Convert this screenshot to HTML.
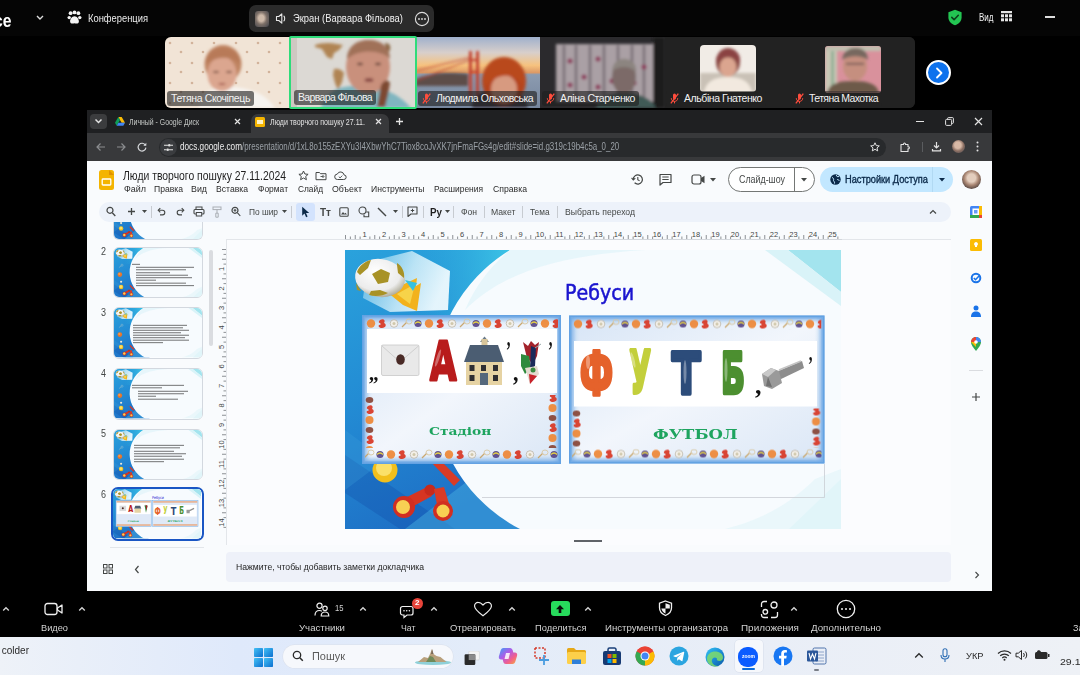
<!DOCTYPE html>
<html lang="uk">
<head>
<meta charset="utf-8">
<title>Zoom — Люди творчого пошуку</title>
<style>
*{box-sizing:border-box;margin:0;padding:0}
html,body{width:1080px;height:675px;overflow:hidden;background:#000}
body{font-family:"Liberation Sans",sans-serif;color:#fff;position:relative}
.abs{position:absolute}
.t{position:absolute;white-space:nowrap;line-height:1;transform-origin:0 50%}
/* ---------- zoom top ---------- */
#ztop{left:0;top:0;width:1080px;height:36px;background:#050505}
#gallery{left:165px;top:37px;width:750px;height:71px;background:#1c1c1c;border-radius:6px;overflow:hidden}
.tile{position:absolute;top:0;height:71px;overflow:hidden}
.nm{position:absolute;left:2px;bottom:2px;height:15px;padding:0 4px 0 4px;background:rgba(30,30,30,.62);border-radius:3px;font-size:10.5px;line-height:15px;color:#f2f2f2;white-space:nowrap;letter-spacing:.1px}
.mic{display:inline-block;width:9px;height:11px;vertical-align:-2px;margin-right:5px}
/* ---------- chrome ---------- */
#chrome{left:87px;top:110px;width:905px;height:481px;background:#f9fbfd;overflow:hidden}
#tabbar{left:0;top:0;width:905px;height:24px;background:#1f2020}
#addr{left:0;top:24px;width:905px;height:27px;background:#37383a}
/* ---------- bottom ---------- */
#zbot{left:0;top:591px;width:1080px;height:46px;background:#000}
#task{left:0;top:637px;width:1080px;height:38px;background:#e6edf7}
</style>
</head>
<body>
<svg width="0" height="0" style="position:absolute"><defs>
<linearGradient id="gbl" x1="0" y1="0" x2=".35" y2="1"><stop offset="0" stop-color="#2aa2dc"/><stop offset=".5" stop-color="#238cd4"/><stop offset="1" stop-color="#1e70c6"/></linearGradient>
<linearGradient id="gcy" x1="0" y1="0" x2="1" y2="0"><stop offset="0" stop-color="#2aa6dc" stop-opacity="0"/><stop offset="1" stop-color="#43d0ea"/></linearGradient>
<linearGradient id="gfr" x1="0" y1="0" x2="1" y2="1"><stop offset="0" stop-color="#d7e5f6"/><stop offset=".5" stop-color="#f2f6fc"/><stop offset="1" stop-color="#dbe7f6"/></linearGradient>
<linearGradient id="ghex" x1="0" y1="0" x2="1" y2=".3"><stop offset="0" stop-color="#bfeaf8" stop-opacity=".35"/><stop offset=".6" stop-color="#dff5fc" stop-opacity=".8"/><stop offset="1" stop-color="#f4fcff" stop-opacity=".92"/></linearGradient>
<filter id="sb"><feGaussianBlur stdDeviation=".6"/></filter>
<filter id="sb3" x="-10%" y="-10%" width="120%" height="120%"><feGaussianBlur stdDeviation="2.500"/></filter>
<filter id="sb2"><feGaussianBlur stdDeviation="1.200"/></filter>
<radialGradient id="gball" cx=".4" cy=".35" r=".7"><stop offset="0" stop-color="#fff"/><stop offset=".7" stop-color="#ececec"/><stop offset="1" stop-color="#a8a48f"/></radialGradient>
<symbol id="bg" viewBox="0 0 496 279" preserveAspectRatio="none">
  <rect width="496" height="279" fill="#f6fafd"/>
  <rect width="200" height="279" fill="url(#gbl)"/>
  <rect x="60" width="120" height="90" fill="url(#gcy)"/>
  <path d="M0 205L110 279H55L0 243z" fill="#0f4aa6" opacity=".3"/><path d="M60 279L150 210 178 279z" fill="#49b4e2" opacity=".45"/><path d="M0 180l40 30-40 30z" fill="#3aa0dc" opacity=".3"/><g filter="url(#sb)"><circle cx="33" cy="150" r="13" fill="#e8752a"/><circle cx="30" cy="146" r="6" fill="#f49a4a"/><circle cx="40" cy="190" r="6" fill="#f0e9d8"/><path d="M28 110l14-10" stroke="#d8d0b8" stroke-width="2"/><circle cx="45" cy="97" r="6" fill="none" stroke="#e8e0c8" stroke-width="1.500"/></g>
  <path d="M165 0A160 160 0 0 0 175 279L496 279 496 0z" fill="#f7fbfe"/>
  <path d="M165 0A160 160 0 0 0 120 60 C160 20 220 5 300 0z" fill="#e4f5fb" opacity=".9"/>
  <path d="M443 0h53v42z" fill="#a3e4ee"/><path d="M443 0l53 42v14L420 0z" fill="#d9f3f8"/>
  <path d="M496 279v-50l-52 50z" fill="#cdeff6"/><path d="M380 279c30-8 60-20 90-50l26-10v60z" fill="#e6f6fa" opacity=".8"/>
  <path d="M67 1L105 21 103 60 45 62 18 48 23 12z" fill="url(#ghex)"/>
  <g filter="url(#sb)"><path d="M42 42l30-14-1 8 5-3-4 28-14-6z" fill="#f2b21f"/><path d="M52 44l18-10-5 20z" fill="#f7d34a"/><path d="M60 30l12 3-4 8z" fill="#35c1e0"/>
  <ellipse cx="35" cy="28" rx="25" ry="19" transform="rotate(8 35 28)" fill="url(#gball)"/><path d="M27 24l9-5 9 4-2 9-10 2z" fill="#a89226"/><path d="M12 22c2-6 8-11 14-12l-3 8-8 7zM52 13c5 3 8 9 7 15l-6-5-1-8zM24 45c6 2 14 1 19-2l-8-3-9 1zM11 33l5 8-4-1z" fill="#a89226"/></g>
  <g filter="url(#sb)"><circle cx="40" cy="220" r="12.500" fill="#f2bf1f"/><circle cx="39" cy="218" r="8" fill="#fbe06a"/>
  <path d="M86 212l7-4 22 22-6 6z" fill="#d93a25"/>
  <path d="M60 248l22-11 5 9-22 12z" fill="#d63422"/><circle cx="59" cy="257" r="11" fill="#d12f20"/><circle cx="58" cy="257" r="7" fill="#f8cf52"/><circle cx="85" cy="240" r="5.500" fill="#c62a1c"/>
  <path d="M89 239l10-2 6 20-12 3z" fill="#d93a25"/><circle cx="98" cy="261" r="10" fill="#d12f20"/><circle cx="98" cy="261" r="6.500" fill="#f8cf52"/></g>
</symbol>
<pattern id="items" width="58" height="11" patternUnits="userSpaceOnUse"><circle cx="6" cy="5.500" r="4.200" fill="#ee8a3a"/><path d="M15 2c3-2 6 0 4 3 3 1 2 5-2 5-3 0-4-2-3-3 2 0 2-1 1-2-1 0-2-1 0-3z" fill="#d93a2a"/><circle cx="29" cy="5.500" r="3.800" fill="#f4f0e8" stroke="#b9b3a3" stroke-width=".8"/><circle cx="29" cy="5.500" r="1.500" fill="#cfc6a8"/><path d="M37 9l5-5" stroke="#c9a46a" stroke-width="1.300"/><ellipse cx="44" cy="3.500" rx="3" ry="2.500" fill="none" stroke="#d8c9a6" stroke-width="1"/><circle cx="53" cy="5.500" r="3.600" fill="#5a4a8a"/><path d="M50 5.500c2-2 4-2 6 0" stroke="#e8d33a" stroke-width="1.200" fill="none"/></pattern>
<pattern id="itemsv" width="11" height="30" patternUnits="userSpaceOnUse"><ellipse cx="5.500" cy="5" rx="3.800" ry="3" fill="#8a4a3a"/><path d="M4 11c3-2 6 0 4 3 3 1 2 5-2 5-3 0-4-2-3-3 2 0 2-1 1-2-1 0-2-1 0-3z" fill="#d93a2a"/><circle cx="5.500" cy="25" r="4" fill="#ee8a3a"/></pattern>
</defs></svg>
<div id="ztop" class="abs">
  <span class="t" style="left:-6px;top:11.8px;font-size:18px;color:#fff;font-weight:bold;transform:scaleX(0.874)">ce</span>
  <svg class="abs" style="left:35px;top:14px" width="10" height="8" viewBox="0 0 10 8"><path d="M2 2 L5 5 L8 2" fill="none" stroke="#ddd" stroke-width="1.4"/></svg>
  <svg class="abs" style="left:67px;top:10px" width="15" height="15" viewBox="0 0 15 15"><g fill="#f4f4f4"><circle cx="3.6" cy="3.2" r="1.9"/><circle cx="7.5" cy="2.4" r="1.9"/><circle cx="11.4" cy="3.2" r="1.9"/><circle cx="2.2" cy="7.6" r="1.7"/><circle cx="12.8" cy="7.6" r="1.7"/><path d="M7.5 6.2c2.6 0 4.4 3 4.4 5.2 0 1.6-1.3 2.2-2.4 2.2-.8 0-1.3-.4-2-.4s-1.200.4-2 .4c-1.100 0-2.400-.6-2.400-2.200 0-2.200 1.800-5.200 4.400-5.200z"/></g></svg>
  <span class="t" style="left:88px;top:12.5px;font-size:11px;color:#ececec;transform:scaleX(0.851)">Конференция</span>
  <div class="abs" style="left:249px;top:5px;width:185px;height:27px;background:#2b2b2b;border-radius:7px"></div>
  <div class="abs" style="left:255px;top:11px;width:14px;height:16px;border-radius:3px;background:radial-gradient(ellipse at 45% 45%,#cdb9a8 0 25%,#7d7068 50%,#3c4048 100%)"></div>
  <svg class="abs" style="left:275px;top:12px" width="12" height="13" viewBox="0 0 12 13"><path d="M1.500 4.500h2.300l3-2.700v9.400l-3-2.700H1.500z" fill="none" stroke="#e8e8e8" stroke-width="1.100" stroke-linejoin="round"/><path d="M9 4.200c.9.700.9 3.900 0 4.600" fill="none" stroke="#e8e8e8" stroke-width="1.100" stroke-linecap="round"/></svg>
  <span class="t" style="left:293px;top:13.05px;font-size:11.5px;color:#f0f0f0;transform:scaleX(0.815)">Экран (Варвара Фільова)</span>
  <svg class="abs" style="left:414px;top:11px" width="16" height="16" viewBox="0 0 16 16"><circle cx="8" cy="8" r="6.600" fill="none" stroke="#ddd" stroke-width="1.100"/><circle cx="5" cy="8" r=".9" fill="#ddd"/><circle cx="8" cy="8" r=".9" fill="#ddd"/><circle cx="11" cy="8" r=".9" fill="#ddd"/></svg>
  <svg class="abs" style="left:947px;top:9px" width="16" height="17" viewBox="0 0 16 17"><path d="M8 .8l6.600 2.400v5c0 3.900-2.800 6.700-6.600 8-3.800-1.300-6.600-4.100-6.600-8v-5z" fill="#23c552"/><path d="M4.800 8.400l2.300 2.300 4.200-4.400" fill="none" stroke="#0a3d19" stroke-width="1.600" stroke-linecap="round" stroke-linejoin="round"/></svg>
  <span class="t" style="left:979px;top:12.25px;font-size:10.5px;color:#f0f0f0;transform:scaleX(0.763)">Вид</span>
  <svg class="abs" style="left:1001px;top:11px" width="11" height="11" viewBox="0 0 11 11"><g fill="#e6e6e6"><rect x="0" y="0" width="11" height="2.200"/><rect x="0" y="3.300" width="3" height="3"/><rect x="4" y="3.300" width="3" height="3"/><rect x="8" y="3.300" width="3" height="3"/><rect x="0" y="7.300" width="3" height="3"/><rect x="4" y="7.300" width="3" height="3"/><rect x="8" y="7.300" width="3" height="3"/></g></svg>
  <div class="abs" style="left:1045px;top:16px;width:10px;height:1.500px;background:#ddd"></div>
</div>
<div id="gallery" class="abs">
  <!-- tile 1 -->
  <div class="tile" style="left:0;width:124px">
    <svg width="124" height="71" viewBox="0 0 124 71"><defs><filter id="b1"><feGaussianBlur stdDeviation="1.600"/></filter><filter id="b2"><feGaussianBlur stdDeviation="3"/></filter><pattern id="dots" width="22" height="20" patternUnits="userSpaceOnUse"><circle cx="5" cy="6" r="1.300" fill="#b98a6a"/><circle cx="16" cy="15" r="1.300" fill="#b98a6a"/></pattern></defs>
      <rect width="124" height="71" fill="#f1e4d6"/><rect width="124" height="71" fill="url(#dots)" opacity=".55"/>
      <g filter="url(#b1)"><path d="M34 71c1-13 8-19 26-21 22-1 40 6 50 21z" fill="#f6f3ef"/><ellipse cx="58" cy="27" rx="18.500" ry="19" fill="#c08462"/><ellipse cx="57" cy="37" rx="14.500" ry="17.500" fill="#dba68f"/><path d="M40 27c2-12 10-17 20-16 9 1 16 7 16 17-7-8-20-11-36-1z" fill="#b87a58"/><ellipse cx="51" cy="35" rx="3" ry="1.100" fill="#6d4536"/><ellipse cx="64" cy="35" rx="3" ry="1.100" fill="#6d4536"/><ellipse cx="57" cy="47" rx="3.500" ry="1.100" fill="#a4574d"/></g>
    </svg>
    <div class="nm" style="letter-spacing:-.38px">Тетяна Скочіпець</div>
  </div>
  <!-- tile 2 (active speaker) -->
  <div class="tile" style="left:124px;width:127px">
    <svg width="127" height="71" viewBox="0 0 127 71">
      <rect width="127" height="71" fill="#dcd9d4"/><rect x="0" width="8" height="71" fill="#cfc8c2"/>
      <g filter="url(#b1)"><path d="M26 8c5-2 14-3 22-1l6 1-4 5-5 3-2 6-5-2-5-8-7-2zM45 32c4-1 8 1 10 4l-2 9-4 8-3-7-2-8z" fill="#b08452"/><path d="M96 6c4 0 6 2 5 7l-3 4z" fill="#8a6642"/>
      <path d="M32 71c3-13 14-22 34-22 22 0 42 5 56 22z" fill="#7fb6c0"/><ellipse cx="79" cy="30" rx="22" ry="27" fill="#c9907c"/><path d="M58 22c0-14 12-20 24-19 11 1 19 7 19 19-8-9-30-11-43 0z" fill="#a07158"/><ellipse cx="71" cy="27" rx="3" ry="1.200" fill="#5f3f34"/><ellipse cx="89" cy="27" rx="3" ry="1.200" fill="#5f3f34"/><ellipse cx="80" cy="43" rx="4.500" ry="2" fill="#8a4a45"/><path d="M92 48c3-5 7-6 9-2l-2 12-3 12h-8z" fill="#7d4a30"/></g>
    </svg>
    
    <div class="nm" style="left:5px;bottom:3px;letter-spacing:-.65px">Варвара Фільова</div>
  </div>
  <!-- tile 3 -->
  <div class="tile" style="left:251px;width:124px">
    <svg width="124" height="71" viewBox="0 0 124 71"><defs><linearGradient id="sky" x1="0" y1="0" x2="0" y2="1"><stop offset="0" stop-color="#9fb0cc"/><stop offset=".22" stop-color="#d8cfcb"/><stop offset=".4" stop-color="#f6c27e"/><stop offset=".5" stop-color="#dd9a66"/><stop offset=".53" stop-color="#8c9bb0"/><stop offset="1" stop-color="#76869e"/></linearGradient></defs>
      <rect width="124" height="71" fill="url(#sky)"/>
      <g filter="url(#b1)"><path d="M0 42c14-6 30-7 52-5v12H0z" fill="#5d4d4a"/><path d="M0 44l56-22M0 34l56-14" stroke="#b8402e" stroke-width="1"/><rect x="53" y="14" width="3" height="46" fill="#c2412d"/><rect x="60" y="14" width="3" height="46" fill="#c2412d"/><rect x="53" y="22" width="10" height="2" fill="#c2412d"/><rect x="53" y="34" width="10" height="2" fill="#c2412d"/>
      <path d="M56 71c0-10 8-16 16-17h22c10 1 16 7 18 17z" fill="#3c3a44"/><ellipse cx="88" cy="44" rx="22" ry="24" fill="#b5451f"/><ellipse cx="88" cy="52" rx="13" ry="14" fill="#d79a80"/><path d="M68 50c-2-22 10-30 22-29 12 1 20 10 18 28-6-12-24-16-40 1z" fill="#b9481f"/></g>
    </svg>
    <div class="nm" style="letter-spacing:-.5px"><svg class="mic" viewBox="0 0 9 11"><rect x="3" y=".5" width="3" height="6" rx="1.500" fill="#ff4d3d"/><path d="M1.300 5.200c0 2 1.400 3.200 3.200 3.200s3.200-1.200 3.200-3.200M4.500 8.400v2" fill="none" stroke="#ff4d3d" stroke-width="1"/><path d="M8.300.6L.8 10.300" stroke="#ff4d3d" stroke-width="1.300"/></svg>Людмила Ольховська</div>
  </div>
  <!-- tile 4 -->
  <div class="tile" style="left:375px;width:125px">
    <svg width="125" height="71" viewBox="0 0 125 71">
      <rect width="125" height="71" fill="#2b2a2d"/>
      <g filter="url(#b1)"><rect x="16" y="7" width="98" height="58" fill="#aaa0a5"/><path d="M24 8v56M36 8v56M50 8v56M64 8v56M78 8v56M92 8v56M104 8v56" stroke="#776d73" stroke-width="2.500"/><g fill="#8a2f55"><circle cx="30" cy="24" r="2.500"/><circle cx="44" cy="40" r="2.500"/><circle cx="58" cy="22" r="2.500"/><circle cx="72" cy="44" r="2.500"/><circle cx="86" cy="28" r="2.500"/><circle cx="30" cy="48" r="2.500"/><circle cx="58" cy="50" r="2.500"/><circle cx="94" cy="46" r="2.500"/></g>
      <rect x="113" y="0" width="12" height="71" fill="#1d1c1f"/><circle cx="104" cy="30" r="2.500" fill="#8a2f55"/><path d="M56 71c2-10 12-15 28-15s28 6 32 15z" fill="#3f5a56"/><ellipse cx="84" cy="40" rx="12" ry="17" fill="#7c6a68"/><path d="M72 34c1-10 8-13 14-12 7 1 11 6 10 13-6-6-16-7-24-1z" fill="#8c8580"/></g>
    </svg>
    <div class="nm" style="letter-spacing:-.43px"><svg class="mic" viewBox="0 0 9 11"><rect x="3" y=".5" width="3" height="6" rx="1.500" fill="#ff4d3d"/><path d="M1.300 5.200c0 2 1.400 3.200 3.200 3.200s3.200-1.200 3.200-3.200M4.500 8.400v2" fill="none" stroke="#ff4d3d" stroke-width="1"/><path d="M8.300.6L.8 10.300" stroke="#ff4d3d" stroke-width="1.300"/></svg>Аліна Старченко</div>
  </div>
  <!-- tile 5 -->
  <div class="tile" style="left:500px;width:125px;background:#222">
    <svg class="abs" style="left:35px;top:8px" width="56" height="47" viewBox="0 0 56 47"><defs><clipPath id="c5"><rect width="56" height="47" rx="4"/></clipPath></defs><g clip-path="url(#c5)"><rect width="56" height="47" fill="#f1ece6"/><g filter="url(#b1)"><rect x="0" y="28" width="56" height="19" fill="#c9c1b6"/><path d="M4 47c2-10 10-15 24-15s22 5 24 15z" fill="#f2e9df"/><ellipse cx="28" cy="17" rx="12" ry="14" fill="#8a4a44"/><ellipse cx="28" cy="22" rx="8.500" ry="10" fill="#dba58f"/><path d="M16 18c0-10 6-14 13-14s12 5 11 14c-6-7-16-8-24 0z" fill="#8b4343"/></g></g></svg>
    <div class="nm" style="left:1px;letter-spacing:-.43px;background:rgba(34,34,34,.55)"><svg class="mic" viewBox="0 0 9 11"><rect x="3" y=".5" width="3" height="6" rx="1.500" fill="#ff4d3d"/><path d="M1.300 5.200c0 2 1.400 3.200 3.200 3.200s3.200-1.200 3.200-3.200M4.500 8.400v2" fill="none" stroke="#ff4d3d" stroke-width="1"/><path d="M8.300.6L.8 10.300" stroke="#ff4d3d" stroke-width="1.300"/></svg>Альбіна Гнатенко</div>
  </div>
  <!-- tile 6 -->
  <div class="tile" style="left:625px;width:125px;background:#222">
    <svg class="abs" style="left:35px;top:9px" width="56" height="47" viewBox="0 0 56 47"><defs><clipPath id="c6"><rect width="56" height="47" rx="3"/></clipPath></defs><g clip-path="url(#c6)"><rect width="56" height="47" fill="#d9919c"/><g filter="url(#b1)"><rect x="0" y="0" width="12" height="47" fill="#c9c7b6"/><rect x="6" y="0" width="3" height="47" fill="#8fae95"/><rect x="0" y="0" width="56" height="5" fill="#bfc1b0"/><path d="M2 47c2-9 10-12 26-12s24 3 26 12z" fill="#6d5a49"/><ellipse cx="30" cy="20" rx="12" ry="15" fill="#c58f7f"/><path d="M17 14c1-9 7-12 14-12 7 0 12 4 12 12-7-5-18-5-26 0z" fill="#77675f"/><rect x="21" y="17" width="18" height="1.500" fill="#5a4a48"/></g></g></svg>
    <div class="nm" style="left:1px;letter-spacing:-.59px;background:rgba(34,34,34,.55)"><svg class="mic" viewBox="0 0 9 11"><rect x="3" y=".5" width="3" height="6" rx="1.500" fill="#ff4d3d"/><path d="M1.300 5.200c0 2 1.400 3.200 3.200 3.200s3.200-1.200 3.200-3.200M4.500 8.400v2" fill="none" stroke="#ff4d3d" stroke-width="1"/><path d="M8.300.6L.8 10.300" stroke="#ff4d3d" stroke-width="1.300"/></svg>Тетяна Махотка</div>
  </div>
</div>
<div class="abs" style="left:288.500px;top:36px;width:128px;height:73px;border:2.500px solid #2fdc7a;border-radius:2px"></div>
<div class="abs" style="left:926px;top:60px;width:25px;height:25px;border-radius:50%;background:#0e72ed;border:2px solid #fff"></div>
<svg class="abs" style="left:934px;top:67px" width="10" height="12" viewBox="0 0 10 12"><path d="M3 1.500L7.500 6 3 10.500" fill="none" stroke="#fff" stroke-width="1.800" stroke-linecap="round" stroke-linejoin="round"/></svg>
<div id="chrome" class="abs"><div class="abs" id="cw" style="left:-87px;top:-110px;width:1080px;height:675px">
  <div class="abs" style="left:87px;top:110px;width:905px;height:24px;background:#1f2022"></div>
  <div class="abs" style="left:87px;top:133px;width:905px;height:28px;background:#38393b"></div>
  <!-- tab strip -->
  <div class="abs" style="left:90px;top:114px;width:17px;height:15px;border-radius:4px;background:#3b3c3e"></div>
  <svg class="abs" style="left:94px;top:118px" width="9" height="7" viewBox="0 0 9 7"><path d="M1.500 1.500L4.500 4.500 7.500 1.500" fill="none" stroke="#e3e3e3" stroke-width="1.500"/></svg>
  <svg class="abs" style="left:115px;top:117px" width="10" height="9" viewBox="0 0 10 9"><path d="M3.300 0h3.400L10 5.800H6.600z" fill="#fbbc04"/><path d="M3.300 0L0 5.800l1.700 3L5 3z" fill="#0f9d58"/><path d="M1.700 8.800h6.600L10 5.800H3.400z" fill="#4285f4"/></svg>
  <span class="t" style="left:129px;top:117.5px;font-size:9px;color:#c4c7c5;transform:scaleX(0.768)">Личный - Google Диск</span>
  <svg class="abs" style="left:234px;top:118px" width="7" height="7" viewBox="0 0 7 7"><path d="M1 1l5 5M6 1L1 6" stroke="#e3e3e3" stroke-width="1.200"/></svg>
  <div class="abs" style="left:251px;top:114px;width:138px;height:20px;background:#38393b;border-radius:7px 7px 0 0"></div>
  <div class="abs" style="left:255px;top:117px;width:10px;height:10px;border-radius:1.500px;background:#f4b400"></div>
  <div class="abs" style="left:257px;top:120px;width:6px;height:4px;background:#fff3c4"></div>
  <span class="t" style="left:270px;top:117.5px;font-size:9px;color:#e3e3e3;transform:scaleX(0.784)">Люди творчого пошуку 27.11.</span>
  <svg class="abs" style="left:375px;top:118px" width="7" height="7" viewBox="0 0 7 7"><path d="M1 1l5 5M6 1L1 6" stroke="#e3e3e3" stroke-width="1.200"/></svg>
  <svg class="abs" style="left:395px;top:117px" width="9" height="9" viewBox="0 0 9 9"><path d="M4.500 1v7M1 4.500h7" stroke="#e3e3e3" stroke-width="1.300"/></svg>
  <div class="abs" style="left:916px;top:121px;width:8px;height:1.200px;background:#e3e3e3"></div>
  <svg class="abs" style="left:945px;top:117px" width="9" height="9" viewBox="0 0 9 9"><rect x=".6" y="2.400" width="6" height="6" rx="1" fill="none" stroke="#e3e3e3" stroke-width="1"/><path d="M2.600 2.400V1.400c0-.4.300-.8.800-.8h4.200c.4 0 .8.300.8.800v4.200c0 .4-.3.800-.8.800H6.600" fill="none" stroke="#e3e3e3" stroke-width="1"/></svg>
  <svg class="abs" style="left:974px;top:117px" width="9" height="9" viewBox="0 0 9 9"><path d="M1 1l7 7M8 1L1 8" stroke="#e3e3e3" stroke-width="1.200"/></svg>
  <!-- address bar -->
  <svg class="abs" style="left:96px;top:142px" width="10" height="10" viewBox="0 0 10 10"><path d="M9 5H1.500M4.500 1.500L1 5l3.500 3.500" fill="none" stroke="#8b8d90" stroke-width="1.200"/></svg>
  <svg class="abs" style="left:116px;top:142px" width="10" height="10" viewBox="0 0 10 10"><path d="M1 5h7.500M5.500 1.500L9 5 5.500 8.500" fill="none" stroke="#8b8d90" stroke-width="1.200"/></svg>
  <svg class="abs" style="left:137px;top:142px" width="10" height="10" viewBox="0 0 10 10"><path d="M8.400 3.200A3.900 3.900 0 1 0 8.900 5.600" fill="none" stroke="#d7d9dc" stroke-width="1.200"/><path d="M9.300.8v3h-3z" fill="#d7d9dc"/></svg>
  <div class="abs" style="left:159px;top:138px;width:727px;height:19px;border-radius:10px;background:#282a2c"></div>
  <div class="abs" style="left:160px;top:139px;width:17px;height:17px;border-radius:50%;background:#3a3c3f"></div>
  <svg class="abs" style="left:164px;top:143px" width="9" height="9" viewBox="0 0 9 9"><path d="M0 2.200h4M6.500 2.200H9M0 6.800h2.500M5 6.800h4" stroke="#e3e3e3" stroke-width="1.100"/><circle cx="5.300" cy="2.200" r="1.300" fill="#e3e3e3"/><circle cx="3.700" cy="6.800" r="1.300" fill="#e3e3e3"/></svg>
  <span class="t" style="left:180px;top:142px;font-size:10px;color:#ececec;transform:scaleX(0.820)">docs.google.com</span>
  <span class="t" style="left:242px;top:142px;font-size:10px;color:#9aa0a6;transform:scaleX(0.790)">/presentation/d/1xL8o155zEXYu3I4XbwYhC7Tiox8coJvXK7jnFmaFGs4g/edit#slide=id.g319c19b4c5a_0_20</span>
  <svg class="abs" style="left:870px;top:142px" width="10" height="10" viewBox="0 0 10 10"><path d="M5 .8l1.300 2.800 3 .3-2.300 2 .7 3L5 7.300 2.300 8.900l.7-3-2.300-2 3-.3z" fill="none" stroke="#e3e3e3" stroke-width="1"/></svg>
  <svg class="abs" style="left:899px;top:141px" width="12" height="12" viewBox="0 0 12 12"><path d="M2 3.500h2.500c-.3-1.800 2.300-1.800 2 0H9v2.300c1.800-.3 1.800 2.300 0 2V10.500H2z" fill="none" stroke="#e3e3e3" stroke-width="1.100" stroke-linejoin="round"/></svg>
  <div class="abs" style="left:922px;top:142px;width:1px;height:10px;background:#5a5c5f"></div>
  <svg class="abs" style="left:931px;top:141px" width="11" height="11" viewBox="0 0 11 11"><path d="M5.500 1v5.500M3 4.500L5.500 7 8 4.500M1.500 8v1.800h8V8" fill="none" stroke="#e3e3e3" stroke-width="1.200"/></svg>
  <div class="abs" style="left:952px;top:140px;width:13px;height:13px;border-radius:50%;background:radial-gradient(circle at 45% 40%,#d8b9a6 0 30%,#8b6f63 55%,#4a4a52 100%)"></div>
  <svg class="abs" style="left:976px;top:141px" width="3" height="11" viewBox="0 0 3 11"><circle cx="1.500" cy="1.500" r="1" fill="#e3e3e3"/><circle cx="1.500" cy="5.500" r="1" fill="#e3e3e3"/><circle cx="1.500" cy="9.500" r="1" fill="#e3e3e3"/></svg>
  <!-- docs header -->
  <div class="abs" style="left:99px;top:170px;width:15px;height:20px;border-radius:2.500px;background:#f4b400"></div>
  <svg class="abs" style="left:99px;top:170px" width="15" height="20" viewBox="0 0 15 20"><path d="M10 0l5 5h-5z" fill="#e09200"/><rect x="3.200" y="9" width="8.600" height="6" rx=".8" fill="none" stroke="#fff" stroke-width="1.300"/></svg>
  <span class="t" style="left:123px;top:168.75px;font-size:13.5px;color:#1f1f1f;transform:scaleX(0.770)">Люди творчого пошуку 27.11.2024</span>
  <svg class="abs" style="left:298px;top:170px" width="11" height="11" viewBox="0 0 11 11"><path d="M5.500 1l1.400 3 3.200.3-2.400 2.200.7 3.200-2.900-1.700-2.900 1.700.7-3.200L.9 4.300l3.200-.3z" fill="none" stroke="#444746" stroke-width="1"/></svg>
  <svg class="abs" style="left:315px;top:170px" width="12" height="11" viewBox="0 0 12 11"><path d="M1 2.500h3.500l1 1.200H11v6H1z" fill="none" stroke="#444746" stroke-width="1"/><path d="M5.500 6.500h3M7.500 5l1.500 1.500L7.500 8" fill="none" stroke="#444746" stroke-width=".9"/></svg>
  <svg class="abs" style="left:334px;top:170px" width="13" height="11" viewBox="0 0 13 11"><path d="M3.500 9.500a2.700 2.700 0 0 1-.2-5.400 3.500 3.500 0 0 1 6.700.8 2.300 2.300 0 0 1-.3 4.600z" fill="none" stroke="#444746" stroke-width="1"/><path d="M4.800 6.700l1.300 1.200 2.200-2.300" fill="none" stroke="#444746" stroke-width=".9"/></svg>
  <span class="t" style="left:124px;top:183.75px;font-size:9.5px;color:#2b2b2b;transform:scaleX(0.942)">Файл</span>
  <span class="t" style="left:154px;top:183.75px;font-size:9.5px;color:#2b2b2b;transform:scaleX(0.904)">Правка</span>
  <span class="t" style="left:191px;top:183.75px;font-size:9.5px;color:#2b2b2b;transform:scaleX(0.931)">Вид</span>
  <span class="t" style="left:216px;top:183.75px;font-size:9.5px;color:#2b2b2b;transform:scaleX(0.906)">Вставка</span>
  <span class="t" style="left:258px;top:183.75px;font-size:9.5px;color:#2b2b2b;transform:scaleX(0.889)">Формат</span>
  <span class="t" style="left:298px;top:183.75px;font-size:9.5px;color:#2b2b2b;transform:scaleX(0.876)">Слайд</span>
  <span class="t" style="left:332px;top:183.75px;font-size:9.5px;color:#2b2b2b;transform:scaleX(0.927)">Объект</span>
  <span class="t" style="left:371px;top:183.75px;font-size:9.5px;color:#2b2b2b;transform:scaleX(0.903)">Инструменты</span>
  <span class="t" style="left:434px;top:183.75px;font-size:9.5px;color:#2b2b2b;transform:scaleX(0.887)">Расширения</span>
  <span class="t" style="left:492.5px;top:183.75px;font-size:9.5px;color:#2b2b2b;transform:scaleX(0.912)">Справка</span>
  <!-- right header -->
  <svg class="abs" style="left:631px;top:173px" width="13" height="13" viewBox="0 0 13 13"><path d="M2.200 6.500a4.600 4.600 0 1 1 1.400 3.300" fill="none" stroke="#444746" stroke-width="1.200"/><path d="M.6 4.800l1.700 2.200 2-1.800" fill="none" stroke="#444746" stroke-width="1.100"/><path d="M6.800 4v2.800l1.800 1.100" fill="none" stroke="#444746" stroke-width="1.100"/></svg>
  <svg class="abs" style="left:659px;top:173px" width="13" height="13" viewBox="0 0 13 13"><path d="M1 1.500h11v8H4L1 12z" fill="none" stroke="#444746" stroke-width="1.200" stroke-linejoin="round"/><path d="M3.300 4h6.400M3.300 6.500h6.400" stroke="#444746" stroke-width="1"/></svg>
  <svg class="abs" style="left:691px;top:174px" width="15" height="11" viewBox="0 0 15 11"><rect x="1" y="1" width="9" height="9" rx="2" fill="none" stroke="#444746" stroke-width="1.200"/><path d="M10 4l3.500-2.200v7.400L10 7z" fill="#444746"/></svg>
  <svg class="abs" style="left:710px;top:178px" width="6" height="4" viewBox="0 0 6 4"><path d="M0 0h6L3 3.500z" fill="#444746"/></svg>
  <div class="abs" style="left:728px;top:167px;width:87px;height:25px;border:1px solid #747775;border-radius:13px;background:#fff"></div>
  <div class="abs" style="left:794px;top:168px;width:1px;height:23px;background:#747775"></div>
  <span class="t" style="left:738.5px;top:174.5px;font-size:10px;color:#444746;transform:scaleX(0.887)">Слайд-шоу</span>
  <svg class="abs" style="left:801px;top:178px" width="6" height="4" viewBox="0 0 6 4"><path d="M0 0h6L3 3.500z" fill="#444746"/></svg>
  <div class="abs" style="left:820px;top:167px;width:133px;height:25px;border-radius:13px;background:#c2e7ff"></div>
  <div class="abs" style="left:932px;top:167px;width:1px;height:25px;background:#b1d9f3"></div>
  <svg class="abs" style="left:830px;top:174px" width="11" height="11" viewBox="0 0 11 11"><circle cx="5.500" cy="5.500" r="5.200" fill="#0b2a4a"/><path d="M2 3.500c1.500.5 2 1.500 1.500 2.500S5 7.500 4.500 9.500M6.500 1c-.5 1.500 1 2 2.500 1.500M7 5.500c1 0 2 .5 2.500 1.500" fill="none" stroke="#c2e7ff" stroke-width="1"/></svg>
  <span style="-webkit-text-stroke:.35px #0b2a4a"><span class="t" style="left:845px;top:174.5px;font-size:10px;color:#0b2a4a;transform:scaleX(0.923)">Настройки Доступа</span></span>
  <svg class="abs" style="left:939px;top:178px" width="6" height="4" viewBox="0 0 6 4"><path d="M0 0h6L3 3.500z" fill="#0b2a4a"/></svg>
  <div class="abs" style="left:962px;top:170px;width:19px;height:19px;border-radius:50%;background:radial-gradient(circle at 50% 42%,#e3cdbd 0 28%,#a88572 50%,#5c4b45 75%,#3a3a44 100%)"></div>
  <!-- toolbar -->
  <div class="abs" style="left:99px;top:202px;width:852px;height:20px;border-radius:10px;background:#edf2fa"></div>
  <div class="abs" style="left:296px;top:203px;width:19px;height:18px;border-radius:3px;background:#d3e3fd"></div>
  <svg class="abs" style="left:106px;top:206px" width="10" height="11" viewBox="0 0 10 11"><circle cx="4" cy="4.300" r="3" fill="none" stroke="#444746" stroke-width="1.200"/><path d="M6.300 6.700L9.300 10" stroke="#444746" stroke-width="1.300"/></svg>
  <svg class="abs" style="left:127px;top:207px" width="9" height="9" viewBox="0 0 9 9"><path d="M4.500 1v7M1 4.500h7" stroke="#444746" stroke-width="1.300"/></svg>
  <svg class="abs" style="left:142px;top:210px" width="5" height="4" viewBox="0 0 5 4"><path d="M0 0h5L2.500 3z" fill="#444746"/></svg>
  <div class="abs" style="left:151px;top:206px;width:1px;height:12px;background:#c7cbd1"></div>
  <svg class="abs" style="left:157px;top:207px" width="9" height="9" viewBox="0 0 9 9"><path d="M1.500 3.300h4a2.300 2.300 0 0 1 0 4.600H3" fill="none" stroke="#444746" stroke-width="1.100"/><path d="M3.300 1.200L1.200 3.300l2.100 2.100" fill="none" stroke="#444746" stroke-width="1.100"/></svg>
  <svg class="abs" style="left:176px;top:207px" width="9" height="9" viewBox="0 0 9 9"><path d="M7.500 3.300h-4a2.300 2.300 0 0 0 0 4.600H6" fill="none" stroke="#444746" stroke-width="1.100"/><path d="M5.700 1.200l2.100 2.100-2.100 2.100" fill="none" stroke="#444746" stroke-width="1.100"/></svg>
  <svg class="abs" style="left:193px;top:206px" width="12" height="11" viewBox="0 0 12 11"><rect x="3" y="1" width="6" height="2.500" fill="none" stroke="#444746" stroke-width="1"/><rect x="1" y="3.500" width="10" height="4.500" rx="1" fill="none" stroke="#444746" stroke-width="1.100"/><rect x="3.300" y="6.500" width="5.400" height="3.500" fill="#edf2fa" stroke="#444746" stroke-width="1"/></svg>
  <svg class="abs" style="left:212px;top:206px" width="10" height="12" viewBox="0 0 10 12"><rect x="1" y="1" width="8" height="2.600" fill="none" stroke="#a9adb3" stroke-width="1"/><path d="M5 3.600v3.500M3.800 7.200h2.400v4H3.800z" fill="none" stroke="#a9adb3" stroke-width="1"/></svg>
  <svg class="abs" style="left:231px;top:206px" width="10" height="11" viewBox="0 0 10 11"><circle cx="4" cy="4.300" r="3" fill="none" stroke="#444746" stroke-width="1.200"/><path d="M6.300 6.700L9.300 10M2.600 4.300h2.800M4 2.900v2.800" stroke="#444746" stroke-width="1.100"/></svg>
  <span class="t" style="left:249px;top:207.25px;font-size:9.5px;color:#444746;transform:scaleX(0.880)">По шир</span>
  <svg class="abs" style="left:282px;top:210px" width="5" height="4" viewBox="0 0 5 4"><path d="M0 0h5L2.500 3z" fill="#444746"/></svg>
  <div class="abs" style="left:291px;top:206px;width:1px;height:12px;background:#c7cbd1"></div>
  <svg class="abs" style="left:301px;top:206px" width="9" height="12" viewBox="0 0 9 12"><path d="M1.200.8v9l2.300-2.200 1.600 3.600 1.500-.7L5 7h3.200z" fill="#0b2a4a"/></svg>
  <span class="t" style="left:319.5px;top:206.75px;font-size:10.5px;color:#444746;font-weight:bold;transform:scaleX(0.951)">Тт</span>
  <svg class="abs" style="left:339px;top:207px" width="10" height="10" viewBox="0 0 10 10"><rect x=".8" y=".8" width="8.400" height="8.400" rx="1" fill="none" stroke="#444746" stroke-width="1.100"/><path d="M2 7.500l2-2.500 1.500 1.700 1-1L8 7.500z" fill="#444746"/></svg>
  <svg class="abs" style="left:358px;top:206px" width="12" height="12" viewBox="0 0 12 12"><circle cx="4.500" cy="4.500" r="3.500" fill="none" stroke="#444746" stroke-width="1.100"/><path d="M8.200 6h2.500v4.800H6V8.400" fill="none" stroke="#444746" stroke-width="1.100"/></svg>
  <svg class="abs" style="left:377px;top:207px" width="10" height="10" viewBox="0 0 10 10"><path d="M1 1l8 8" stroke="#444746" stroke-width="1.500"/></svg>
  <svg class="abs" style="left:392.500px;top:210px" width="5" height="4" viewBox="0 0 5 4"><path d="M0 0h5L2.500 3z" fill="#444746"/></svg>
  <div class="abs" style="left:401.500px;top:206px;width:1px;height:12px;background:#c7cbd1"></div>
  <svg class="abs" style="left:407px;top:206px" width="11" height="11" viewBox="0 0 11 11"><path d="M1 1h9v7H4l-3 2.500z" fill="none" stroke="#444746" stroke-width="1.100" stroke-linejoin="round"/><path d="M5.500 2.800v3.400M3.800 4.500h3.400" stroke="#444746" stroke-width="1"/></svg>
  <div class="abs" style="left:423px;top:206px;width:1px;height:12px;background:#c7cbd1"></div>
  <span class="t" style="left:429.5px;top:206.5px;font-size:11px;color:#1f1f1f;font-weight:bold;transform:scaleX(0.891)">Pу</span>
  <svg class="abs" style="left:445px;top:210px" width="5" height="4" viewBox="0 0 5 4"><path d="M0 0h5L2.500 3z" fill="#444746"/></svg>
  <div class="abs" style="left:453px;top:206px;width:1px;height:12px;background:#c7cbd1"></div>
  <span class="t" style="left:461px;top:207.25px;font-size:9.5px;color:#444746;transform:scaleX(0.901)">Фон</span>
  <div class="abs" style="left:484px;top:206px;width:1px;height:12px;background:#c7cbd1"></div>
  <span class="t" style="left:491px;top:207.25px;font-size:9.5px;color:#444746;transform:scaleX(0.911)">Макет</span>
  <div class="abs" style="left:522px;top:206px;width:1px;height:12px;background:#c7cbd1"></div>
  <span class="t" style="left:529.5px;top:207.25px;font-size:9.5px;color:#444746;transform:scaleX(0.872)">Тема</span>
  <div class="abs" style="left:557px;top:206px;width:1px;height:12px;background:#c7cbd1"></div>
  <span class="t" style="left:564.5px;top:207.25px;font-size:9.5px;color:#444746;transform:scaleX(0.910)">Выбрать переход</span>
  <svg class="abs" style="left:929px;top:209px" width="8" height="6" viewBox="0 0 8 6"><path d="M1 4.500l3-3 3 3" fill="none" stroke="#444746" stroke-width="1.200"/></svg>
  <!-- filmstrip -->
  <div class="abs" style="left:87px;top:222px;width:905px;height:18px;background:#f9fbfd"></div>
  <div class="abs" style="left:225.500px;top:239px;width:725px;height:306px;background:#fbfcfe;border-left:1px solid #e3e6ea;border-top:1px solid #e3e6ea"></div>
  <div class="abs" style="left:112.500px;top:222px;width:90px;height:17.500px;border:1px solid #d3d8df;border-top:0;border-radius:0 0 6px 6px;overflow:hidden;background:#fff"><svg class="abs" style="left:0;top:-33px" width="88" height="50"><use href="#bg" width="88" height="50"/></svg></div>
  <div class="abs" style="border:1px solid #d3d8df;border-radius:6px;left:112.500px;top:246.6px;width:90px;height:51.500px;background:#fff;overflow:hidden"><svg class="abs" style="left:0;top:0" width="88" height="49.500" viewBox="0 0 88 50" preserveAspectRatio="none"><use href="#bg" width="88" height="50"/><rect x="18" y="16" width="8" height="1" fill="#444" opacity=".75"/><rect x="22" y="19" width="58" height="1" fill="#444" opacity=".75"/><rect x="22" y="21.5" width="50" height="1" fill="#444" opacity=".75"/><rect x="22" y="24.5" width="34" height="1" fill="#444" opacity=".75"/><rect x="22" y="27" width="52" height="1" fill="#444" opacity=".75"/><rect x="22" y="29.5" width="56" height="1" fill="#444" opacity=".75"/><rect x="22" y="32" width="20" height="1" fill="#444" opacity=".75"/><rect x="22" y="35" width="50" height="1" fill="#444" opacity=".75"/><rect x="22" y="37.5" width="58" height="1" fill="#444" opacity=".75"/></svg></div><span class="t" style="left:100.5px;top:247.3px;font-size:10px;color:#444746;transform:scaleX(0.899)">2</span><div class="abs" style="border:1px solid #d3d8df;border-radius:6px;left:112.500px;top:307.3px;width:90px;height:51.500px;background:#fff;overflow:hidden"><svg class="abs" style="left:0;top:0" width="88" height="49.500" viewBox="0 0 88 50" preserveAspectRatio="none"><use href="#bg" width="88" height="50"/><rect x="19" y="17" width="54" height="1" fill="#444" opacity=".75"/><rect x="19" y="19.5" width="50" height="1" fill="#444" opacity=".75"/><rect x="19" y="22" width="56" height="1" fill="#444" opacity=".75"/><rect x="19" y="24.5" width="48" height="1" fill="#444" opacity=".75"/><rect x="19" y="27" width="56" height="1" fill="#444" opacity=".75"/><rect x="19" y="29.5" width="52" height="1" fill="#444" opacity=".75"/><rect x="19" y="32" width="56" height="1" fill="#444" opacity=".75"/><rect x="19" y="34.5" width="30" height="1" fill="#444" opacity=".75"/></svg></div><span class="t" style="left:100.5px;top:308px;font-size:10px;color:#444746;transform:scaleX(0.899)">3</span><div class="abs" style="border:1px solid #d3d8df;border-radius:6px;left:112.500px;top:368px;width:90px;height:51.500px;background:#fff;overflow:hidden"><svg class="abs" style="left:0;top:0" width="88" height="49.500" viewBox="0 0 88 50" preserveAspectRatio="none"><use href="#bg" width="88" height="50"/><rect x="18" y="16" width="52" height="1" fill="#444" opacity=".75"/><rect x="18" y="18.5" width="30" height="1" fill="#444" opacity=".75"/><rect x="24" y="22" width="50" height="1" fill="#444" opacity=".75"/><rect x="24" y="24.5" width="46" height="1" fill="#444" opacity=".75"/><rect x="24" y="27" width="18" height="1" fill="#444" opacity=".75"/><rect x="24" y="30" width="40" height="1" fill="#444" opacity=".75"/></svg></div><span class="t" style="left:100.5px;top:368.7px;font-size:10px;color:#444746;transform:scaleX(0.899)">4</span><div class="abs" style="border:1px solid #d3d8df;border-radius:6px;left:112.500px;top:428.7px;width:90px;height:51.500px;background:#fff;overflow:hidden"><svg class="abs" style="left:0;top:0" width="88" height="49.500" viewBox="0 0 88 50" preserveAspectRatio="none"><use href="#bg" width="88" height="50"/><rect x="20" y="15" width="50" height="1" fill="#444" opacity=".75"/><rect x="20" y="17.5" width="46" height="1" fill="#444" opacity=".75"/><rect x="20" y="21" width="40" height="1" fill="#444" opacity=".75"/><rect x="20" y="23.5" width="52" height="1" fill="#444" opacity=".75"/><rect x="20" y="26" width="48" height="1" fill="#444" opacity=".75"/><rect x="20" y="29" width="50" height="1" fill="#444" opacity=".75"/><rect x="20" y="31.5" width="30" height="1" fill="#444" opacity=".75"/></svg></div><span class="t" style="left:100.5px;top:429.4px;font-size:10px;color:#444746;transform:scaleX(0.899)">5</span><div class="abs" style="border:2px solid #1a56c4;border-radius:7px;left:111px;top:487.400px;width:93px;height:54px;background:#fff;overflow:hidden"><svg class="abs" style="left:0;top:0" width="88" height="49.500" viewBox="0 0 88 50" preserveAspectRatio="none"><use href="#bg" width="88" height="50"/><g><rect x="3" y="11.500" width="35.300" height="26.500" fill="#dfe9f7" stroke="#74aee6" stroke-width=".5"/><rect x="3.600" y="12" width="34" height="1.800" fill="#e9a070" opacity=".7"/><rect x="3.600" y="35.500" width="34" height="1.800" fill="#e9a070" opacity=".7"/><rect x="3.900" y="14" width="33.700" height="11.400" fill="#fff"/>
<rect x="39.700" y="11.600" width="45.300" height="26.300" fill="#dfe9f7" stroke="#74aee6" stroke-width=".5"/><rect x="40.300" y="12.100" width="44" height="1.800" fill="#e9a070" opacity=".7"/><rect x="40.300" y="35.400" width="44" height="1.800" fill="#e9a070" opacity=".7"/><rect x="40.600" y="16.100" width="43.100" height="11.700" fill="#fff"/>
<rect x="6.500" y="16.900" width="6.600" height="5.400" fill="#dcdcdc"/><circle cx="9.800" cy="19.500" r="1" fill="#4a2a25"/>
<path d="M21.200 19.900l1.100-3h4.900l1.100 3z" fill="#4c5d72"/><rect x="21.500" y="19.900" width="6.400" height="4.100" fill="#e6d3a3"/><path d="M31.500 16.500l3 .5-1.500 7z" fill="#2f8a3c"/><path d="M32.500 16l2 1-1 5z" fill="#a3202a"/>
<path d="M73.800 22.500l7-3.500.5 1.200-7 3.500z" fill="#8d8d8d"/><rect x="73.500" y="21" width="3.200" height="3.500" fill="#9a9a9a"/>
<g font-family="DejaVu Sans, sans-serif" font-weight="bold"><text x="15.200" y="23.200" font-size="9.500" textLength="5" lengthAdjust="spacingAndGlyphs" fill="#b81c1c">А</text><text x="41.500" y="25.800" font-size="10.500" textLength="6.300" lengthAdjust="spacingAndGlyphs" fill="#e5622b">Ф</text><text x="50.200" y="25.600" font-size="10.500" textLength="4.300" lengthAdjust="spacingAndGlyphs" fill="#c3cf3c">У</text><text x="57.700" y="25.800" font-size="10.300" textLength="5.600" lengthAdjust="spacingAndGlyphs" fill="#2c4c7a">Т</text><text x="66.300" y="25.700" font-size="10.300" textLength="4.800" lengthAdjust="spacingAndGlyphs" fill="#4c8f30">Б</text></g>
<text x="39" y="9.700" font-family="DejaVu Sans, sans-serif" font-size="4" fill="#1a14cf" textLength="12" lengthAdjust="spacingAndGlyphs">Ребуси</text>
<text x="14.700" y="33" font-family="DejaVu Serif, serif" font-weight="bold" font-size="2.400" fill="#1ea45f" textLength="11" lengthAdjust="spacingAndGlyphs">Стадіон</text>
<text x="54.500" y="33.500" font-family="DejaVu Serif, serif" font-weight="bold" font-size="2.400" fill="#1ea45f" textLength="15" lengthAdjust="spacingAndGlyphs">ФУТБОЛ</text></g></svg></div><span class="t" style="left:100.5px;top:490.1px;font-size:10px;color:#444746;transform:scaleX(0.899)">6</span>
  <div class="abs" style="left:209px;top:250px;width:4px;height:96px;border-radius:2px;background:#dadce0"></div>
  <div class="abs" style="left:110px;top:547px;width:94px;height:1px;background:#e3e6ea"></div>
  <svg class="abs" style="left:103px;top:564px" width="10" height="10" viewBox="0 0 10 10"><g fill="none" stroke="#444746" stroke-width="1"><rect x=".5" y=".5" width="3.500" height="3.500"/><rect x="6" y=".5" width="3.500" height="3.500"/><rect x=".5" y="6" width="3.500" height="3.500"/><rect x="6" y="6" width="3.500" height="3.500"/></g></svg>
  <svg class="abs" style="left:134px;top:565px" width="6" height="9" viewBox="0 0 6 9"><path d="M4.500 1L1.500 4.500 4.500 8" fill="none" stroke="#444746" stroke-width="1.200"/></svg>
  <svg class="abs" style="left:340px;top:226px" width="520" height="15" viewBox="0 0 520 15"><g stroke="#5f6368" stroke-width=".7"><path d="M5.50 13V9.00"/><path d="M10.38 13V10.50"/><path d="M15.25 13V9.00"/><path d="M20.12 13V10.50"/><path d="M29.88 13V10.50"/><path d="M34.75 13V9.00"/><path d="M39.62 13V10.50"/><path d="M49.38 13V10.50"/><path d="M54.25 13V9.00"/><path d="M59.12 13V10.50"/><path d="M68.88 13V10.50"/><path d="M73.75 13V9.00"/><path d="M78.62 13V10.50"/><path d="M88.38 13V10.50"/><path d="M93.25 13V9.00"/><path d="M98.12 13V10.50"/><path d="M107.88 13V10.50"/><path d="M112.75 13V9.00"/><path d="M117.62 13V10.50"/><path d="M127.38 13V10.50"/><path d="M132.25 13V9.00"/><path d="M137.12 13V10.50"/><path d="M146.88 13V10.50"/><path d="M151.75 13V9.00"/><path d="M156.62 13V10.50"/><path d="M166.38 13V10.50"/><path d="M171.25 13V9.00"/><path d="M176.12 13V10.50"/><path d="M185.88 13V10.50"/><path d="M190.75 13V9.00"/><path d="M195.62 13V10.50"/><path d="M205.38 13V10.50"/><path d="M210.25 13V9.00"/><path d="M215.12 13V10.50"/><path d="M224.88 13V10.50"/><path d="M229.75 13V9.00"/><path d="M234.62 13V10.50"/><path d="M244.38 13V10.50"/><path d="M249.25 13V9.00"/><path d="M254.12 13V10.50"/><path d="M263.88 13V10.50"/><path d="M268.75 13V9.00"/><path d="M273.62 13V10.50"/><path d="M283.38 13V10.50"/><path d="M288.25 13V9.00"/><path d="M293.12 13V10.50"/><path d="M302.88 13V10.50"/><path d="M307.75 13V9.00"/><path d="M312.62 13V10.50"/><path d="M322.38 13V10.50"/><path d="M327.25 13V9.00"/><path d="M332.12 13V10.50"/><path d="M341.88 13V10.50"/><path d="M346.75 13V9.00"/><path d="M351.62 13V10.50"/><path d="M361.38 13V10.50"/><path d="M366.25 13V9.00"/><path d="M371.12 13V10.50"/><path d="M380.88 13V10.50"/><path d="M385.75 13V9.00"/><path d="M390.62 13V10.50"/><path d="M400.38 13V10.50"/><path d="M405.25 13V9.00"/><path d="M410.12 13V10.50"/><path d="M419.88 13V10.50"/><path d="M424.75 13V9.00"/><path d="M429.62 13V10.50"/><path d="M439.38 13V10.50"/><path d="M444.25 13V9.00"/><path d="M449.12 13V10.50"/><path d="M458.88 13V10.50"/><path d="M463.75 13V9.00"/><path d="M468.62 13V10.50"/><path d="M478.38 13V10.50"/><path d="M483.25 13V9.00"/><path d="M488.12 13V10.50"/><path d="M497.88 13V10.50"/></g><path d="M5 13.500H502" stroke="#c8ccd1" stroke-width=".6"/><g font-family="Liberation Sans, sans-serif" font-size="7.500" fill="#444746" text-anchor="middle"><text x="24.50" y="10.500">1</text><text x="44.00" y="10.500">2</text><text x="63.50" y="10.500">3</text><text x="83.00" y="10.500">4</text><text x="102.50" y="10.500">5</text><text x="122.00" y="10.500">6</text><text x="141.50" y="10.500">7</text><text x="161.00" y="10.500">8</text><text x="180.50" y="10.500">9</text><text x="200.00" y="10.500">10</text><text x="219.50" y="10.500">11</text><text x="239.00" y="10.500">12</text><text x="258.50" y="10.500">13</text><text x="278.00" y="10.500">14</text><text x="297.50" y="10.500">15</text><text x="317.00" y="10.500">16</text><text x="336.50" y="10.500">17</text><text x="356.00" y="10.500">18</text><text x="375.50" y="10.500">19</text><text x="395.00" y="10.500">20</text><text x="414.50" y="10.500">21</text><text x="434.00" y="10.500">22</text><text x="453.50" y="10.500">23</text><text x="473.00" y="10.500">24</text><text x="492.50" y="10.500">25</text></g></svg>
  <svg class="abs" style="left:213px;top:244px" width="14" height="290" viewBox="0 0 14 290"><g stroke="#5f6368" stroke-width=".7"><path d="M13 5.50H9.00"/><path d="M13 10.38H10.50"/><path d="M13 15.25H9.00"/><path d="M13 20.12H10.50"/><path d="M13 29.88H10.50"/><path d="M13 34.75H9.00"/><path d="M13 39.62H10.50"/><path d="M13 49.38H10.50"/><path d="M13 54.25H9.00"/><path d="M13 59.12H10.50"/><path d="M13 68.88H10.50"/><path d="M13 73.75H9.00"/><path d="M13 78.62H10.50"/><path d="M13 88.38H10.50"/><path d="M13 93.25H9.00"/><path d="M13 98.12H10.50"/><path d="M13 107.88H10.50"/><path d="M13 112.75H9.00"/><path d="M13 117.62H10.50"/><path d="M13 127.38H10.50"/><path d="M13 132.25H9.00"/><path d="M13 137.12H10.50"/><path d="M13 146.88H10.50"/><path d="M13 151.75H9.00"/><path d="M13 156.62H10.50"/><path d="M13 166.38H10.50"/><path d="M13 171.25H9.00"/><path d="M13 176.12H10.50"/><path d="M13 185.88H10.50"/><path d="M13 190.75H9.00"/><path d="M13 195.62H10.50"/><path d="M13 205.38H10.50"/><path d="M13 210.25H9.00"/><path d="M13 215.12H10.50"/><path d="M13 224.88H10.50"/><path d="M13 229.75H9.00"/><path d="M13 234.62H10.50"/><path d="M13 244.38H10.50"/><path d="M13 249.25H9.00"/><path d="M13 254.12H10.50"/><path d="M13 263.88H10.50"/><path d="M13 268.75H9.00"/><path d="M13 273.62H10.50"/><path d="M13 283.38H10.50"/></g><g font-family="Liberation Sans, sans-serif" font-size="7.500" fill="#444746" text-anchor="middle"><text x="0" y="0" transform="translate(10.500 25.00) rotate(-90)">1</text><text x="0" y="0" transform="translate(10.500 44.50) rotate(-90)">2</text><text x="0" y="0" transform="translate(10.500 64.00) rotate(-90)">3</text><text x="0" y="0" transform="translate(10.500 83.50) rotate(-90)">4</text><text x="0" y="0" transform="translate(10.500 103.00) rotate(-90)">5</text><text x="0" y="0" transform="translate(10.500 122.50) rotate(-90)">6</text><text x="0" y="0" transform="translate(10.500 142.00) rotate(-90)">7</text><text x="0" y="0" transform="translate(10.500 161.50) rotate(-90)">8</text><text x="0" y="0" transform="translate(10.500 181.00) rotate(-90)">9</text><text x="0" y="0" transform="translate(10.500 200.50) rotate(-90)">10</text><text x="0" y="0" transform="translate(10.500 220.00) rotate(-90)">11</text><text x="0" y="0" transform="translate(10.500 239.50) rotate(-90)">12</text><text x="0" y="0" transform="translate(10.500 259.00) rotate(-90)">13</text><text x="0" y="0" transform="translate(10.500 278.50) rotate(-90)">14</text></g></svg>
  <div class="abs" style="left:345px;top:250px;width:496px;height:279px;overflow:hidden;background:#fff">
<svg class="abs" style="left:0;top:0" width="496" height="279" viewBox="0 0 496 279">
  <use href="#bg" width="496" height="279"/>
  <path d="M137 247.500H479.500V214" fill="none" stroke="#c9cdd3" stroke-width=".8"/>
  <g>
  <rect x="17" y="65" width="199" height="149" fill="#74aee6"/>
  <rect x="18.5" y="66.5" width="196" height="146" fill="#bcd6f2"/>
  <rect x="20" y="68" width="193" height="143" fill="url(#gfr)"/>
  <svg x="17" y="65" width="199" height="149" viewBox="0 0 199 149"><rect x="0" y="0" width="199" height="149" fill="none" stroke="#5f9fe2" stroke-width="9" filter="url(#sb3)" opacity=".8"/></svg>
  <g filter="url(#sb)" opacity=".95">
  <svg x="20" y="68" width="193" height="11" viewBox="0 0 193 11"><rect width="193" height="11" fill="url(#items)"/></svg>
  <svg x="20" y="199" width="193" height="11" viewBox="0 0 193 11"><rect x="-20" width="213" height="11" fill="url(#items)" transform="translate(20 0)"/></svg>
  <svg x="19" y="145" width="11" height="53"><rect width="11" height="200" fill="url(#itemsv)"/></svg>
  <svg x="202" y="145" width="11" height="53"><rect width="11" height="200" fill="url(#itemsv)" transform="translate(0 -12)"/></svg>
  </g>
  <rect x="22" y="79" width="190" height="64" fill="#fff"/>
</g><g>
  <rect x="224" y="65.5" width="255.5" height="148" fill="#74aee6"/>
  <rect x="225.5" y="67.0" width="252.5" height="145" fill="#bcd6f2"/>
  <rect x="227" y="68.5" width="249.5" height="142" fill="url(#gfr)"/>
  <svg x="224" y="65.5" width="255.5" height="148" viewBox="0 0 255.5 148"><rect x="0" y="0" width="255.5" height="148" fill="none" stroke="#5f9fe2" stroke-width="9" filter="url(#sb3)" opacity=".8"/></svg>
  <g filter="url(#sb)" opacity=".95">
  <svg x="227" y="68.5" width="249.5" height="11" viewBox="0 0 249.5 11"><rect width="249.5" height="11" fill="url(#items)"/></svg>
  <svg x="227" y="198.5" width="249.5" height="11" viewBox="0 0 249.5 11"><rect x="-20" width="269.5" height="11" fill="url(#items)" transform="translate(20 0)"/></svg>
  <svg x="226" y="158.5" width="11" height="39.0"><rect width="11" height="200" fill="url(#itemsv)"/></svg>
  <svg x="465.5" y="158.5" width="11" height="39.0"><rect width="11" height="200" fill="url(#itemsv)" transform="translate(0 -12)"/></svg>
  </g>
  <rect x="229" y="91" width="243" height="65.5" fill="#fff"/>
</g>
<g font-family="DejaVu Sans, sans-serif" font-weight="bold" stroke-linejoin="round" stroke-linecap="round">
  <text x="85" y="129.500" font-size="54" textLength="26.500" lengthAdjust="spacingAndGlyphs" fill="#b81c1c" stroke="#b81c1c" stroke-width="3">А</text>
  <text x="234.800" y="144.500" font-size="60" textLength="33.500" lengthAdjust="spacingAndGlyphs" fill="#e5622b" stroke="#e5622b" stroke-width="3.500">Ф</text>
  <text x="284.500" y="143" font-size="58" textLength="21.500" lengthAdjust="spacingAndGlyphs" fill="#c3cf3c" stroke="#c3cf3c" stroke-width="4">У</text>
  <text x="327" y="144" font-size="57" textLength="28.500" lengthAdjust="spacingAndGlyphs" fill="#2c4c7a" stroke="#2c4c7a" stroke-width="4">Т</text>
  <text x="376" y="143.500" font-size="57" textLength="24" lengthAdjust="spacingAndGlyphs" fill="#4c8f30" stroke="#4c8f30" stroke-width="4">Б</text>
  </g>
  <g fill="#fff" opacity=".35" filter="url(#sb)"><ellipse cx="93" cy="108" rx="1.500" ry="9" transform="rotate(18 93 108)"/><ellipse cx="243" cy="112" rx="2" ry="7"/><ellipse cx="288" cy="110" rx="1.500" ry="8" transform="rotate(-15 288 110)"/><ellipse cx="340" cy="122" rx="1.500" ry="12"/><ellipse cx="381" cy="120" rx="1.500" ry="12"/></g>
  <!-- envelope -->
  <g filter="url(#sb)"><rect x="36.500" y="95" width="37.500" height="30.500" rx="1.500" fill="#e9e9e9" stroke="#c8c8c8" stroke-width=".8"/><path d="M36.500 95.500L55 112 74 95.500" fill="none" stroke="#cfcfcf" stroke-width="1"/><ellipse cx="55.500" cy="109.500" rx="4.300" ry="5.300" fill="#4a2a25"/></g>
  <!-- house -->
  <g filter="url(#sb)"><path d="M135 92l4.500-5.500L144 92z" fill="#6a7a88"/><rect x="136.500" y="89" width="6" height="6" fill="#d8c59a"/><path d="M119 112l6-17h28l6 17z" fill="#4c5d72"/><rect x="121" y="112" width="36" height="23" fill="#e6d3a3"/><g fill="#2d2d33"><rect x="124.500" y="115" width="5" height="6"/><rect x="136" y="115" width="5" height="6"/><rect x="148" y="115" width="5" height="6"/><rect x="124.500" y="125" width="5" height="6"/><rect x="148" y="125" width="5" height="6"/></g><rect x="135" y="123" width="8" height="12" fill="#55677c"/></g>
  <!-- jester upside-down -->
  <g filter="url(#sb)"><path d="M178 92l5 4 3-5 4 4 4-3-2 14-4 8-6-6z" fill="#a3202a"/><path d="M176 104l8 2 2 12-6 6-4-8z" fill="#2f8a3c"/><path d="M186 96l5 2-1 18-5 4z" fill="#1e2a5a"/><path d="M180 118l12-2 2 8-9 10z" fill="#e4d9cf"/><path d="M184 124l8 2-7 8z" fill="#c8202a"/><path d="M190 98l6-4" stroke="#9aa" stroke-width="1"/><circle cx="188" cy="120" r="2.500" fill="#3a8a3f"/></g>
  <!-- bolt -->
  <g filter="url(#sb)"><path d="M431 122l26-11 2 7-25 12z" fill="#8d8d8d"/><path d="M434 120l22-9" stroke="#c4c4c4" stroke-width="1.500"/><path d="M417 124l9-6 8 3 3 12-10 6-8-3z" fill="#9a9a9a"/><path d="M417 124l9-6 5 2-8 7z" fill="#c9c9c9"/><path d="M423 127l4 10-6-1z" fill="#6f6f6f"/></g>
</svg>
</div>
  <span style="-webkit-text-stroke:.55px #1a14cf"><span class="t" style="left:565px;top:281.5px;font-size:22px;color:#1a14cf;font-family:'DejaVu Sans',sans-serif;transform:scaleX(0.865)">Ребуси</span></span>
  <span class="t" style="left:368.5px;top:374px;font-size:20px;color:#111;font-weight:bold;font-family:'Liberation Serif',serif;transform:scaleX(1.000)">”</span>
  <span class="t" style="left:505.5px;top:338px;font-size:26px;color:#111;font-weight:bold;font-family:'Liberation Serif',serif;transform:scaleX(0.577)">’</span>
  <span class="t" style="left:512.5px;top:359.5px;font-size:26px;color:#111;font-weight:bold;font-family:'Liberation Serif',serif;transform:scaleX(0.846)">,</span>
  <span class="t" style="left:548px;top:338px;font-size:26px;color:#111;font-weight:bold;font-family:'Liberation Serif',serif;transform:scaleX(0.577)">’</span>
  <span class="t" style="left:755px;top:372.5px;font-size:26px;color:#111;font-weight:bold;font-family:'Liberation Serif',serif;transform:scaleX(1.000)">,</span>
  <span class="t" style="left:807.5px;top:352px;font-size:24px;color:#111;font-weight:bold;font-family:'Liberation Serif',serif;transform:scaleX(0.625)">’</span>
  <span class="t" style="left:428.5px;top:426.25px;font-size:11.5px;color:#1ea45f;font-weight:bold;font-family:'DejaVu Serif',serif;transform:scaleX(1.205)">Стадіон</span>
  <span class="t" style="left:652.5px;top:428.75px;font-size:12.5px;color:#1ea45f;font-weight:bold;font-family:'DejaVu Serif',serif;transform:scaleX(1.322)">ФУТБОЛ</span>
  <div class="abs" style="left:574px;top:540px;width:28px;height:1.500px;background:#5f6368"></div>
  <div class="abs" style="left:226px;top:552px;width:725px;height:30px;border-radius:4px;background:#eef1f9"></div>
  <span class="t" style="left:236px;top:561.75px;font-size:9.5px;color:#1f1f1f;transform:scaleX(0.908)">Нажмите, чтобы добавить заметки докладчика</span>
  <div class="abs" style="left:960px;top:200px;width:32px;height:391px;background:#f9fbfd"></div>
  <svg class="abs" style="left:970px;top:206px" width="12" height="12" viewBox="0 0 12 12"><rect width="12" height="12" rx="1.500" fill="#4285f4"/><rect x="0" y="9" width="12" height="3" fill="#34a853"/><rect x="9" y="0" width="3" height="12" fill="#fbbc04"/><rect x="9" y="9" width="3" height="3" fill="#ea4335"/><rect x="2.500" y="2.500" width="6.500" height="6.500" fill="#fff"/><rect x="4" y="4" width="3.500" height="3.500" fill="#4285f4" opacity=".8"/></svg>
  <svg class="abs" style="left:970px;top:239px" width="12" height="12" viewBox="0 0 12 12"><rect width="12" height="12" rx="1.500" fill="#fbbc04"/><path d="M6 3a2 2 0 0 1 1 3.700V8H5V6.700A2 2 0 0 1 6 3z" fill="#fff"/></svg>
  <svg class="abs" style="left:970px;top:272px" width="12" height="12" viewBox="0 0 12 12"><circle cx="6" cy="6" r="4.300" fill="none" stroke="#1a73e8" stroke-width="2"/><path d="M3.800 6l1.700 1.700 4-4.200" fill="none" stroke="#1a73e8" stroke-width="1.600"/></svg>
  <svg class="abs" style="left:971px;top:305px" width="10" height="12" viewBox="0 0 10 12"><circle cx="5" cy="3" r="2.500" fill="#1a73e8"/><path d="M0 12c0-4 2-5.500 5-5.500s5 1.500 5 5.500z" fill="#1a73e8"/></svg>
  <svg class="abs" style="left:971px;top:337px" width="10" height="14" viewBox="0 0 10 14"><path d="M5 0a5 5 0 0 1 5 5c0 3.500-5 9-5 9S0 8.500 0 5a5 5 0 0 1 5-5z" fill="#34a853"/><path d="M5 0a5 5 0 0 1 5 5H5z" fill="#4285f4"/><path d="M0 5a5 5 0 0 1 5-5v5z" fill="#ea4335"/><path d="M0 5h5v5z" fill="#fbbc04"/><circle cx="5" cy="5" r="1.800" fill="#fff"/></svg>
  <div class="abs" style="left:969px;top:370px;width:14px;height:1px;background:#dadce0"></div>
  <svg class="abs" style="left:971px;top:392px" width="10" height="10" viewBox="0 0 10 10"><path d="M5 1v8M1 5h8" stroke="#444746" stroke-width="1.200"/></svg>
  <svg class="abs" style="left:974px;top:571px" width="6" height="8" viewBox="0 0 6 8"><path d="M1.500 1L4.500 4 1.500 7" fill="none" stroke="#444746" stroke-width="1.100"/></svg>
</div></div>
<div id="zbot" class="abs"></div>
<div class="abs" id="zb" style="left:0;top:0;width:1080px;height:675px;pointer-events:none">
  <svg class="abs" style="left:2px;top:606px" width="8" height="6" viewBox="0 0 8 6"><path d="M1.200 4.500L4 1.700 6.800 4.500" fill="none" stroke="#d6d6d6" stroke-width="1.300"/></svg>
  <svg class="abs" style="left:44px;top:602px" width="20" height="14" viewBox="0 0 20 14"><rect x="1" y="1.500" width="12" height="11" rx="2.500" fill="none" stroke="#f0f0f0" stroke-width="1.300"/><path d="M13.500 6l4.500-3v8l-4.500-3z" fill="none" stroke="#f0f0f0" stroke-width="1.300" stroke-linejoin="round"/></svg>
  <svg class="abs" style="left:78px;top:606px" width="8" height="6" viewBox="0 0 8 6"><path d="M1.200 4.500L4 1.700 6.800 4.500" fill="none" stroke="#d6d6d6" stroke-width="1.300"/></svg>
  <span class="t" style="left:40.5px;top:622.75px;font-size:9.5px;color:#d2d2d2;transform:scaleX(0.972)">Видео</span>
  <svg class="abs" style="left:314px;top:602px" width="16" height="15" viewBox="0 0 16 15"><circle cx="5.500" cy="3.800" r="2.600" fill="none" stroke="#f0f0f0" stroke-width="1.200"/><path d="M1 13.500c0-3 1.700-5 4.500-5 1 0 1.800.3 2.400.8" fill="none" stroke="#f0f0f0" stroke-width="1.200"/><circle cx="11" cy="6.300" r="2.200" fill="none" stroke="#f0f0f0" stroke-width="1.200"/><path d="M7.200 14c0-2.500 1.400-4 3.800-4s3.800 1.500 3.800 4z" fill="none" stroke="#f0f0f0" stroke-width="1.200"/></svg>
  <span class="t" style="left:335px;top:602.75px;font-size:9.5px;color:#d2d2d2;transform:scaleX(0.804)">15</span>
  <svg class="abs" style="left:359px;top:606px" width="8" height="6" viewBox="0 0 8 6"><path d="M1.200 4.500L4 1.700 6.800 4.500" fill="none" stroke="#d6d6d6" stroke-width="1.300"/></svg>
  <span class="t" style="left:299px;top:622.75px;font-size:9.5px;color:#d2d2d2;transform:scaleX(1.013)">Участники</span>
  <svg class="abs" style="left:399px;top:602px" width="18" height="17" viewBox="0 0 18 17"><path d="M2.500 3.500h8.500a2 2 0 0 1 2 2v4.500a2 2 0 0 1-2 2H7l-3 2.500V12H2.500a2 2 0 0 1-2-2V5.500a2 2 0 0 1 2-2z" fill="none" stroke="#f0f0f0" stroke-width="1.200" transform="translate(1 1)"/><circle cx="5" cy="8.800" r=".8" fill="#f0f0f0"/><circle cx="7.700" cy="8.800" r=".8" fill="#f0f0f0"/><circle cx="10.400" cy="8.800" r=".8" fill="#f0f0f0"/></svg>
  <div class="abs" style="left:411.500px;top:597.500px;width:11px;height:11px;border-radius:50%;background:#e8443a"></div>
  <span class="t" style="left:414.8px;top:599.2px;font-size:8px;color:#fff;font-weight:bold;transform:scaleX(1.011)">2</span>
  <svg class="abs" style="left:430px;top:606px" width="8" height="6" viewBox="0 0 8 6"><path d="M1.200 4.500L4 1.700 6.800 4.500" fill="none" stroke="#d6d6d6" stroke-width="1.300"/></svg>
  <span class="t" style="left:400.5px;top:622.75px;font-size:9.5px;color:#d2d2d2;transform:scaleX(0.920)">Чат</span>
  <svg class="abs" style="left:472.500px;top:601px" width="20" height="16" viewBox="0 0 22 18"><path d="M11 16.500C5 12 1.500 9 1.500 5.500A4 4 0 0 1 5.600 1.500c2 0 3.600 1 5.400 3 1.800-2 3.400-3 5.400-3a4 4 0 0 1 4.100 4c0 3.500-3.500 6.500-9.500 11z" fill="none" stroke="#f0f0f0" stroke-width="1.300"/></svg>
  <svg class="abs" style="left:508px;top:606px" width="8" height="6" viewBox="0 0 8 6"><path d="M1.200 4.500L4 1.700 6.800 4.500" fill="none" stroke="#d6d6d6" stroke-width="1.300"/></svg>
  <span class="t" style="left:450px;top:622.75px;font-size:9.5px;color:#d2d2d2;transform:scaleX(0.996)">Отреагировать</span>
  <div class="abs" style="left:550.500px;top:601px;width:19px;height:15px;border-radius:3px;background:#27db5c"></div>
  <svg class="abs" style="left:555px;top:603.500px" width="10" height="10" viewBox="0 0 10 10"><path d="M5 1l4 4.200H6.300V9H3.700V5.200H1z" fill="#0a0a0a"/></svg>
  <svg class="abs" style="left:584px;top:606px" width="8" height="6" viewBox="0 0 8 6"><path d="M1.200 4.500L4 1.700 6.800 4.500" fill="none" stroke="#d6d6d6" stroke-width="1.300"/></svg>
  <span class="t" style="left:534.5px;top:622.75px;font-size:9.5px;color:#d2d2d2;transform:scaleX(0.982)">Поделиться</span>
  <svg class="abs" style="left:658px;top:600px" width="15" height="17" viewBox="0 0 15 17"><path d="M7.500 1l6 2.200v4.600c0 3.600-2.500 6.300-6 7.700-3.500-1.400-6-4.100-6-7.700V3.200z" fill="none" stroke="#f0f0f0" stroke-width="1.300"/><path d="M7.500 3.200v5.300h4.300c0-.3 0-2.500 0-3.800zM7.500 8.500v5c-2-.9-3.800-2.700-4.200-5z" fill="#f0f0f0"/></svg>
  <span class="t" style="left:605px;top:622.75px;font-size:9.5px;color:#d2d2d2;transform:scaleX(1.016)">Инструменты организатора</span>
  <svg class="abs" style="left:760px;top:599.500px" width="19" height="19" viewBox="0 0 19 19"><g fill="none" stroke="#f0f0f0" stroke-width="1.300"><path d="M1.500 7V4a2.500 2.500 0 0 1 2.500-2.500h3M11 17.500h4a2.500 2.500 0 0 0 2.500-2.500v-3M8 17.500H4A2.500 2.500 0 0 1 1.500 15v-1"/><circle cx="14" cy="5" r="3"/><circle cx="5.300" cy="11.800" r="2.300"/></g></svg>
  <svg class="abs" style="left:790px;top:606px" width="8" height="6" viewBox="0 0 8 6"><path d="M1.200 4.500L4 1.700 6.800 4.500" fill="none" stroke="#d6d6d6" stroke-width="1.300"/></svg>
  <span class="t" style="left:740.5px;top:622.75px;font-size:9.5px;color:#d2d2d2;transform:scaleX(1.043)">Приложения</span>
  <svg class="abs" style="left:836px;top:598.500px" width="20" height="20" viewBox="0 0 20 20"><circle cx="10" cy="10" r="8.700" fill="none" stroke="#f0f0f0" stroke-width="1.300"/><circle cx="6" cy="10" r="1" fill="#f0f0f0"/><circle cx="10" cy="10" r="1" fill="#f0f0f0"/><circle cx="14" cy="10" r="1" fill="#f0f0f0"/></svg>
  <span class="t" style="left:810.5px;top:622.75px;font-size:9.5px;color:#d2d2d2;transform:scaleX(1.024)">Дополнительно</span>
  <span class="t" style="left:1072.5px;top:622.75px;font-size:9.5px;color:#d2d2d2;transform:scaleX(0.943)">Завершить</span>
</div>
<div id="task" class="abs" style="background:linear-gradient(90deg,#eef2f8 0%,#dfe9fb 22%,#e3ecf9 45%,#e9eef7 70%,#eef1f6 100%)"></div>
<div class="abs" style="left:0;top:0;width:1080px;height:675px;pointer-events:none">
  <span class="t" style="left:-6px;top:644.75px;font-size:10.5px;color:#2a2a2a;transform:scaleX(0.952)">s colder</span>
  <svg class="abs" style="left:254px;top:647.500px" width="19" height="19" viewBox="0 0 19 19"><defs><linearGradient id="wl" x1="0" y1="0" x2="1" y2="1"><stop offset="0" stop-color="#45c1f5"/><stop offset="1" stop-color="#0a6fd0"/></linearGradient></defs><g fill="url(#wl)"><rect x="0" y="0" width="9" height="9" rx=".8"/><rect x="10" y="0" width="9" height="9" rx=".8"/><rect x="0" y="10" width="9" height="9" rx=".8"/><rect x="10" y="10" width="9" height="9" rx=".8"/></g></svg>
  <div class="abs" style="left:283px;top:644.500px;width:170px;height:23px;border-radius:11.500px;background:#f6f8fc;box-shadow:0 0 0 .5px #d9dfea"></div>
  <svg class="abs" style="left:292px;top:650px" width="12" height="12" viewBox="0 0 12 12"><circle cx="5" cy="5" r="3.700" fill="none" stroke="#2a2a2a" stroke-width="1.300"/><path d="M7.800 7.800l3 3" stroke="#2a2a2a" stroke-width="1.500"/></svg>
  <span class="t" style="left:311.5px;top:650.8px;font-size:11px;color:#5a5a5a;transform:scaleX(0.995)">Пошук</span>
  <svg class="abs" style="left:414px;top:646px" width="38" height="20" viewBox="0 0 38 20"><g filter="url(#sb)"><ellipse cx="19" cy="16.500" rx="18" ry="2.500" fill="#8fd0d8"/><path d="M4 16l6-5 4 1 2-4 2-5 1.500 5 3 2 4 1 6 5z" fill="#b9a07c"/><path d="M12 16l4-6 3 1 3 5z" fill="#6f8a5a"/><path d="M17 8l1-5 1.500 5z" fill="#7a6a5a"/></g></svg>
  <svg class="abs" style="left:464px;top:651px" width="16" height="14" viewBox="0 0 18 17"><rect x="5" y="0" width="13" height="11" rx="1.500" fill="#f4f4f4" stroke="#c9c9c9" stroke-width=".6"/><rect x="0" y="4" width="13" height="13" rx="1.500" fill="#2b2b2b"/><rect x="5" y="4" width="8" height="7" fill="#8a8a8a"/></svg>
  <svg class="abs" style="left:498px;top:646px" width="20" height="20" viewBox="0 0 20 20"><defs><linearGradient id="cp" x1="0" y1="0" x2="1" y2="1"><stop offset="0" stop-color="#3aa0f5"/><stop offset=".4" stop-color="#b05ae8"/><stop offset=".7" stop-color="#f2608a"/><stop offset="1" stop-color="#f5b13a"/></linearGradient></defs><path d="M7 2h5c1.500 0 2.300 1 2.700 2.300l.6 2.200H17c2 0 2.500 1.800 2 3.500l-1.500 5C17 17 16 18 14.500 18H8c-1.500 0-2.300-1-2.700-2.300l-.6-2.200H3c-2 0-2.500-1.800-2-3.500l1.500-5C3 3 4 2 5.500 2z" fill="url(#cp)"/><path d="M8 7h4l-1.500 6h-4z" fill="#fff" opacity=".85"/></svg>
  <svg class="abs" style="left:532px;top:646px" width="20" height="20" viewBox="0 0 20 20"><path d="M3 2v10h10" fill="none" stroke="#d43a2a" stroke-width="1.500" stroke-dasharray="2 1.500"/><path d="M3 2h10v10" fill="none" stroke="#d43a2a" stroke-width="1.500" stroke-dasharray="2 1.500"/><path d="M12 9v10M7 14h10" stroke="#4a9de0" stroke-width="1.800"/></svg>
  <svg class="abs" style="left:566px;top:647px" width="21" height="18" viewBox="0 0 21 18"><path d="M1 2.500A1.500 1.500 0 0 1 2.500 1H8l2 2h8.500A1.500 1.500 0 0 1 20 4.500V7H1z" fill="#e6a817"/><rect x="1" y="5" width="19" height="12" rx="1.500" fill="#fdd04a"/><rect x="6" y="12.500" width="9" height="4.500" fill="#2f7fd8"/></svg>
  <svg class="abs" style="left:602px;top:646px" width="20" height="20" viewBox="0 0 20 20"><path d="M6 5V3.500A1.500 1.500 0 0 1 7.500 2h5A1.500 1.500 0 0 1 14 3.500V5" fill="none" stroke="#1a3f78" stroke-width="1.500"/><rect x="1" y="5" width="18" height="14" rx="2" fill="#173a73"/><rect x="5.500" y="8" width="4" height="4" fill="#f25022"/><rect x="10.500" y="8" width="4" height="4" fill="#7fba00"/><rect x="5.500" y="13" width="4" height="4" fill="#00a4ef"/><rect x="10.500" y="13" width="4" height="4" fill="#ffb900"/></svg>
  <svg class="abs" style="left:635px;top:646px" width="20" height="20" viewBox="0 0 20 20"><circle cx="10" cy="10" r="9.500" fill="#ea4335"/><path d="M10 10L1.800 5.200A9.500 9.500 0 0 0 10 19.500z" fill="#34a853"/><path d="M10 10v9.500A9.500 9.500 0 0 0 18.200 5.200z" fill="#fbbc04"/><path d="M1.800 5.200A9.500 9.500 0 0 1 18.200 5.200L10 10z" fill="#ea4335"/><circle cx="10" cy="10" r="4.500" fill="#fff"/><circle cx="10" cy="10" r="3.500" fill="#4285f4"/></svg>
  <svg class="abs" style="left:669px;top:646px" width="20" height="20" viewBox="0 0 20 20"><circle cx="10" cy="10" r="9.500" fill="#2ba5e0"/><path d="M4.500 9.800l10-4c.5-.2.900.1.700.9l-1.700 8c-.1.600-.5.700-1 .4l-2.600-1.900-1.300 1.200c-.3.300-.5.200-.5-.2l.2-2.400 4.500-4.100-5.600 3.500-2.400-.8c-.5-.2-.5-.5-.3-.6z" fill="#fff"/></svg>
  <svg class="abs" style="left:705px;top:646.500px" width="20" height="20" viewBox="0 0 20 20"><defs><linearGradient id="ed" x1="0" y1="0" x2="1" y2="1"><stop offset="0" stop-color="#35c1f1"/><stop offset=".5" stop-color="#1b8fd8"/><stop offset="1" stop-color="#0c59a4"/></linearGradient></defs><circle cx="10" cy="10" r="9.500" fill="url(#ed)"/><path d="M2 12c0-5 4-7.500 8-7.500 4.500 0 8 2.500 8 6 0 2-1.500 3.500-3.500 3.500-2.500 0-3-1.500-2.500-2.500-2.500-2.500-6 0-5 3.500 1 3 4 4.500 7 4-5 2-12-1-12-7z" fill="#7fdc6a" opacity=".85"/></svg>
  <div class="abs" style="left:735px;top:640px;width:27.500px;height:32px;border-radius:4px;background:#f6f8fc;box-shadow:0 0 0 .5px #d5dcea"></div>
  <div class="abs" style="left:738px;top:646.500px;width:20px;height:20px;border-radius:9px;background:#0b5cff"></div>
  <span class="t" style="left:741.5px;top:653.75px;font-size:5.5px;color:#fff;font-weight:bold;transform:scaleX(0.904)">zoom</span>
  <div class="abs" style="left:742px;top:668px;width:13px;height:2px;border-radius:1px;background:#0b6bd8"></div>
  <svg class="abs" style="left:773px;top:646px" width="20" height="20" viewBox="0 0 20 20"><circle cx="10" cy="10" r="9.500" fill="#1877f2"/><path d="M11 20v-7.500h2.300l.4-2.800H11V8c0-.8.300-1.400 1.500-1.400h1.400V4.200c-.3 0-1.100-.1-2.100-.1-2.200 0-3.600 1.300-3.600 3.700v1.900H6v2.800h2.200V20z" fill="#fff"/></svg>
  <svg class="abs" style="left:807px;top:647px" width="20" height="18" viewBox="0 0 20 18"><rect x="6" y="1" width="13" height="16" rx="1.500" fill="#e9eef7" stroke="#2b579a" stroke-width=".8"/><path d="M9 5h8M9 8h8M9 11h8M9 14h8" stroke="#2b579a" stroke-width=".8" opacity=".6"/><rect x="0" y="3.500" width="11" height="11" rx="1" fill="#2b579a"/><path d="M2 6l1.500 6 2-5 2 5L9 6" fill="none" stroke="#fff" stroke-width="1.100"/></svg>
  <div class="abs" style="left:814px;top:669px;width:5px;height:1.500px;border-radius:1px;background:#7a7f88"></div>
  <svg class="abs" style="left:914px;top:652px" width="10" height="7" viewBox="0 0 10 7"><path d="M1.200 5.500L5 1.700 8.800 5.500" fill="none" stroke="#2a2a2a" stroke-width="1.300"/></svg>
  <svg class="abs" style="left:940px;top:648px" width="10" height="15" viewBox="0 0 10 15"><rect x="3" y=".8" width="4" height="8" rx="2" fill="none" stroke="#2f6fb5" stroke-width="1.100"/><path d="M1 7c0 2.500 1.700 4 4 4s4-1.500 4-4M5 11v3" fill="none" stroke="#2f6fb5" stroke-width="1.100"/></svg>
  <span class="t" style="left:966px;top:651.5px;font-size:9px;color:#2a2a2a;transform:scaleX(1.031)">УКР</span>
  <svg class="abs" style="left:997px;top:649px" width="15" height="12" viewBox="0 0 15 12"><g fill="none" stroke="#2a2a2a" stroke-width="1.200"><path d="M1 4.500a9.500 9.500 0 0 1 13 0M3.200 6.800a6.200 6.200 0 0 1 8.600 0M5.300 9a3.200 3.200 0 0 1 4.400 0"/></g><circle cx="7.500" cy="10.800" r="1" fill="#2a2a2a"/></svg>
  <svg class="abs" style="left:1015px;top:649px" width="14" height="12" viewBox="0 0 14 12"><path d="M1 4.200h2.300L6.500 1.500v9L3.300 7.800H1z" fill="none" stroke="#2a2a2a" stroke-width="1"/><path d="M8.500 4a3 3 0 0 1 0 4M10.300 2.500a5 5 0 0 1 0 7" fill="none" stroke="#2a2a2a" stroke-width="1"/></svg>
  <svg class="abs" style="left:1034px;top:650px" width="16" height="10" viewBox="0 0 16 10"><rect x="1" y="2" width="12.500" height="7" rx="1.500" fill="#2a2a2a"/><rect x="14" y="4" width="1.500" height="3" fill="#2a2a2a"/><path d="M3 2c0-2 3-2.500 4 0" fill="#2a2a2a"/></svg>
  <span class="t" style="left:1060px;top:657.25px;font-size:9.5px;color:#2a2a2a;transform:scaleX(1.110)">29.11.2024</span>
</div>
</body>
</html>
